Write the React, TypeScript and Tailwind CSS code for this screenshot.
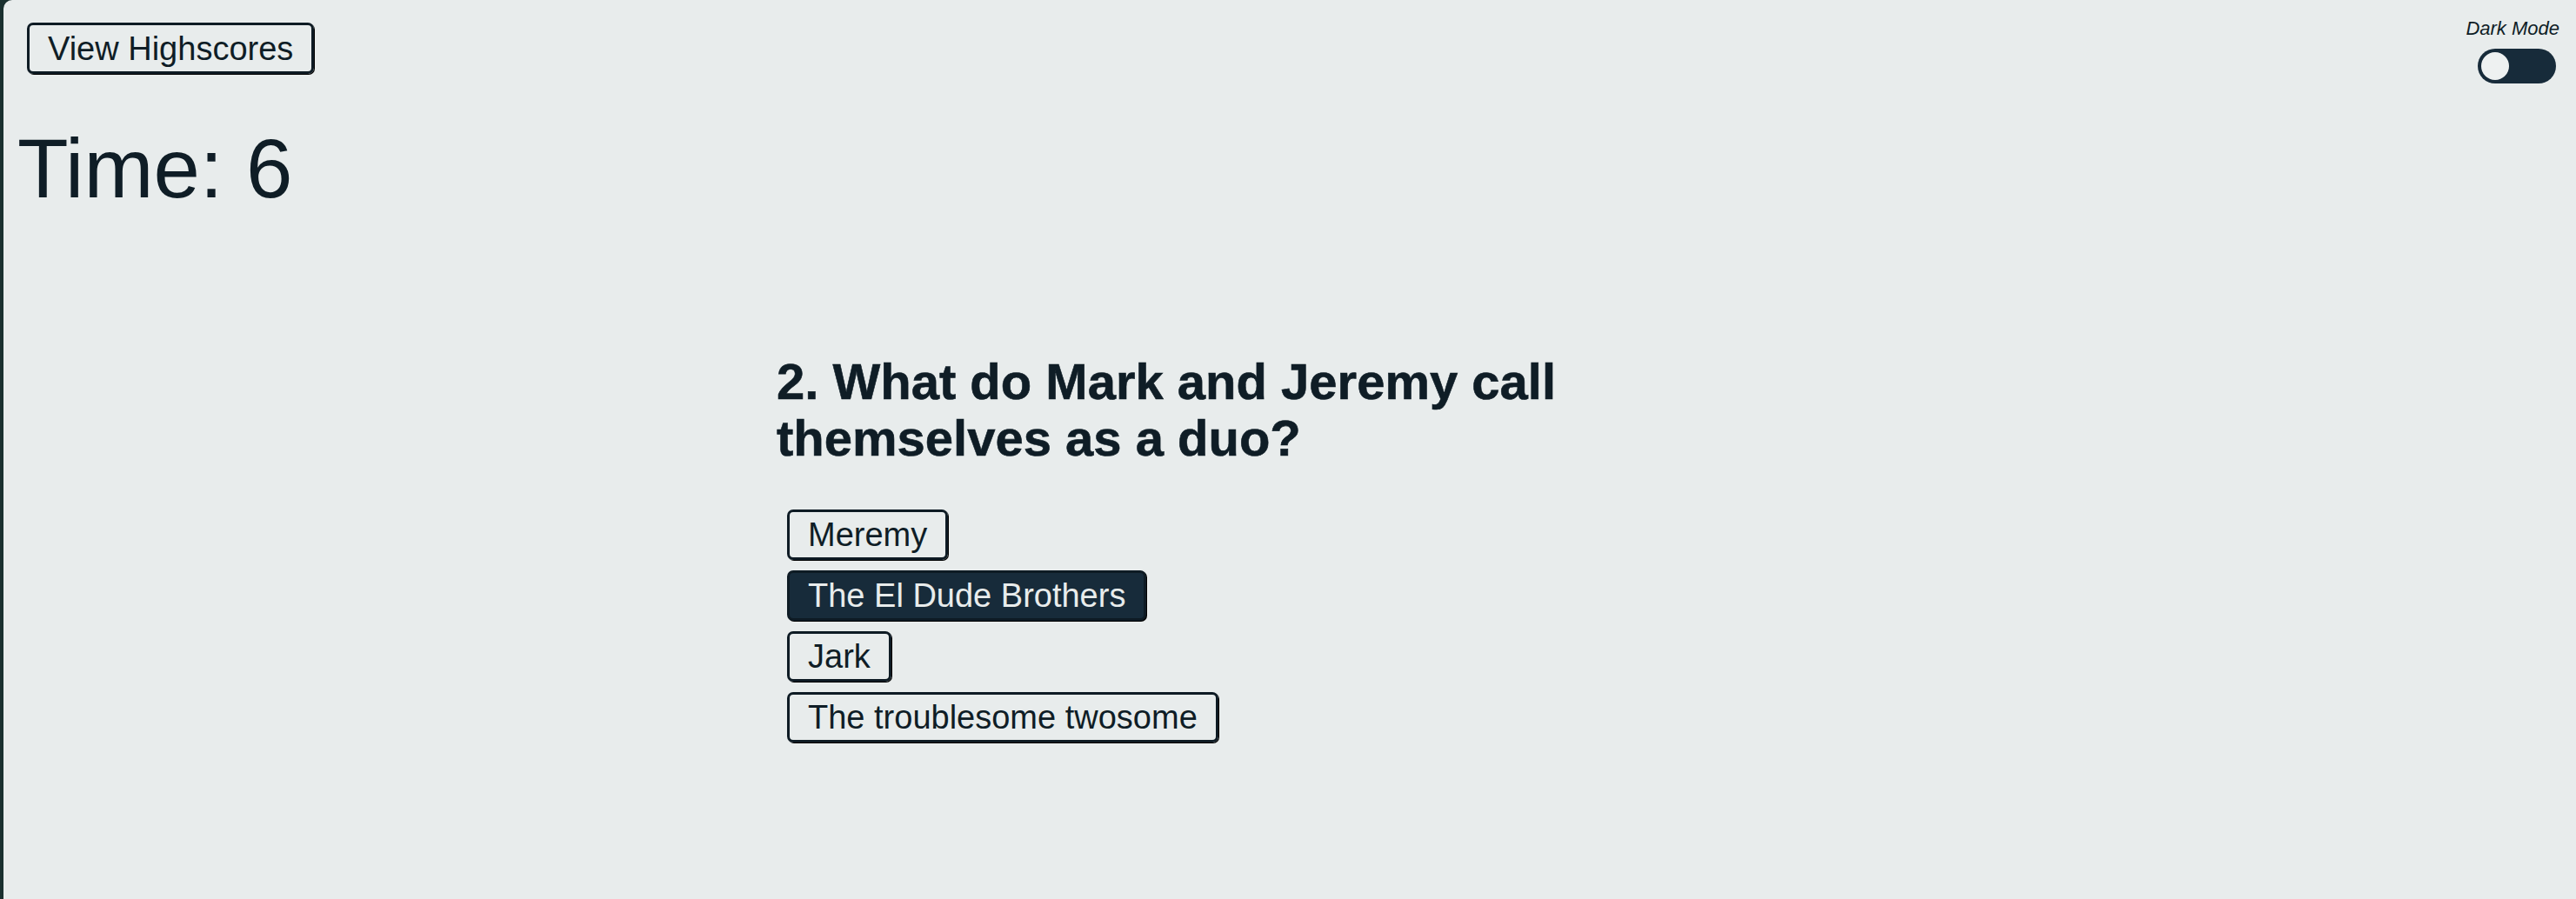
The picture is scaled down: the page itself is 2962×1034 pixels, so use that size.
import React from "react";

const answers = [
  { text: "Meremy", selected: false },
  { text: "The El Dude Brothers", selected: true },
  { text: "Jark", selected: false },
  { text: "The troublesome twosome", selected: false },
];

export default function App() {
  return (
    <div
      className="flex min-h-screen h-[1034px] bg-[#1a302f]"
      style={{ fontFamily: '"Liberation Sans", Arial, Helvetica, sans-serif' }}
    >
      <div className="ml-[4px] flex-1 rounded-tl-[10px] bg-[#e8ecec] text-[#0f1d26] overflow-hidden">
        <header className="flex items-start justify-between pl-[27px] pr-[19px] pt-[20px]">
          <button className="mt-[6px] h-[59px] rounded-[7px] border-[3px] border-[#0e1b24] px-[21px] text-[38px] leading-none text-[#0f1d26] shadow-[1px_1px_0_#000]">
            View Highscores
          </button>
          <div className="flex flex-col items-end">
            <span className="text-[22px] italic leading-[25px] text-[#0f1d26]">Dark Mode</span>
            <div className="mr-[4px] mt-[11px] flex h-[40px] w-[90px] items-center rounded-full bg-[#172b3a] p-[4px]">
              <div className="h-[32px] w-[32px] rounded-full bg-[#eef1f1]" />
            </div>
          </div>
        </header>

        <h1 className="mt-[50px] px-[16px] text-[96px] font-normal leading-none">Time: 6</h1>

        <main className="mx-auto mt-[164px] w-[1180px]">
          <h2 className="text-[58px] font-bold leading-[65px] [-webkit-text-stroke:0.6px_#0f1d26]">
            2. What do Mark and Jeremy call themselves as a duo?
          </h2>
          <div className="mt-[50px] flex flex-col items-start gap-[12px] pl-[12px]">
            {answers.map((a) =>
              a.selected ? (
                <button
                  key={a.text}
                  className="h-[58px] rounded-[7px] border-[3px] border-[#0e1b24] bg-[#172b3a] px-[21px] text-[38px] leading-none text-[#e8ecec] shadow-[1px_1px_0_#000]"
                >
                  {a.text}
                </button>
              ) : (
                <button
                  key={a.text}
                  className="h-[58px] rounded-[7px] border-[3px] border-[#0e1b24] px-[21px] text-[38px] leading-none text-[#0f1d26] shadow-[1px_1px_0_#000]"
                >
                  {a.text}
                </button>
              )
            )}
          </div>
        </main>
      </div>
    </div>
  );
}
